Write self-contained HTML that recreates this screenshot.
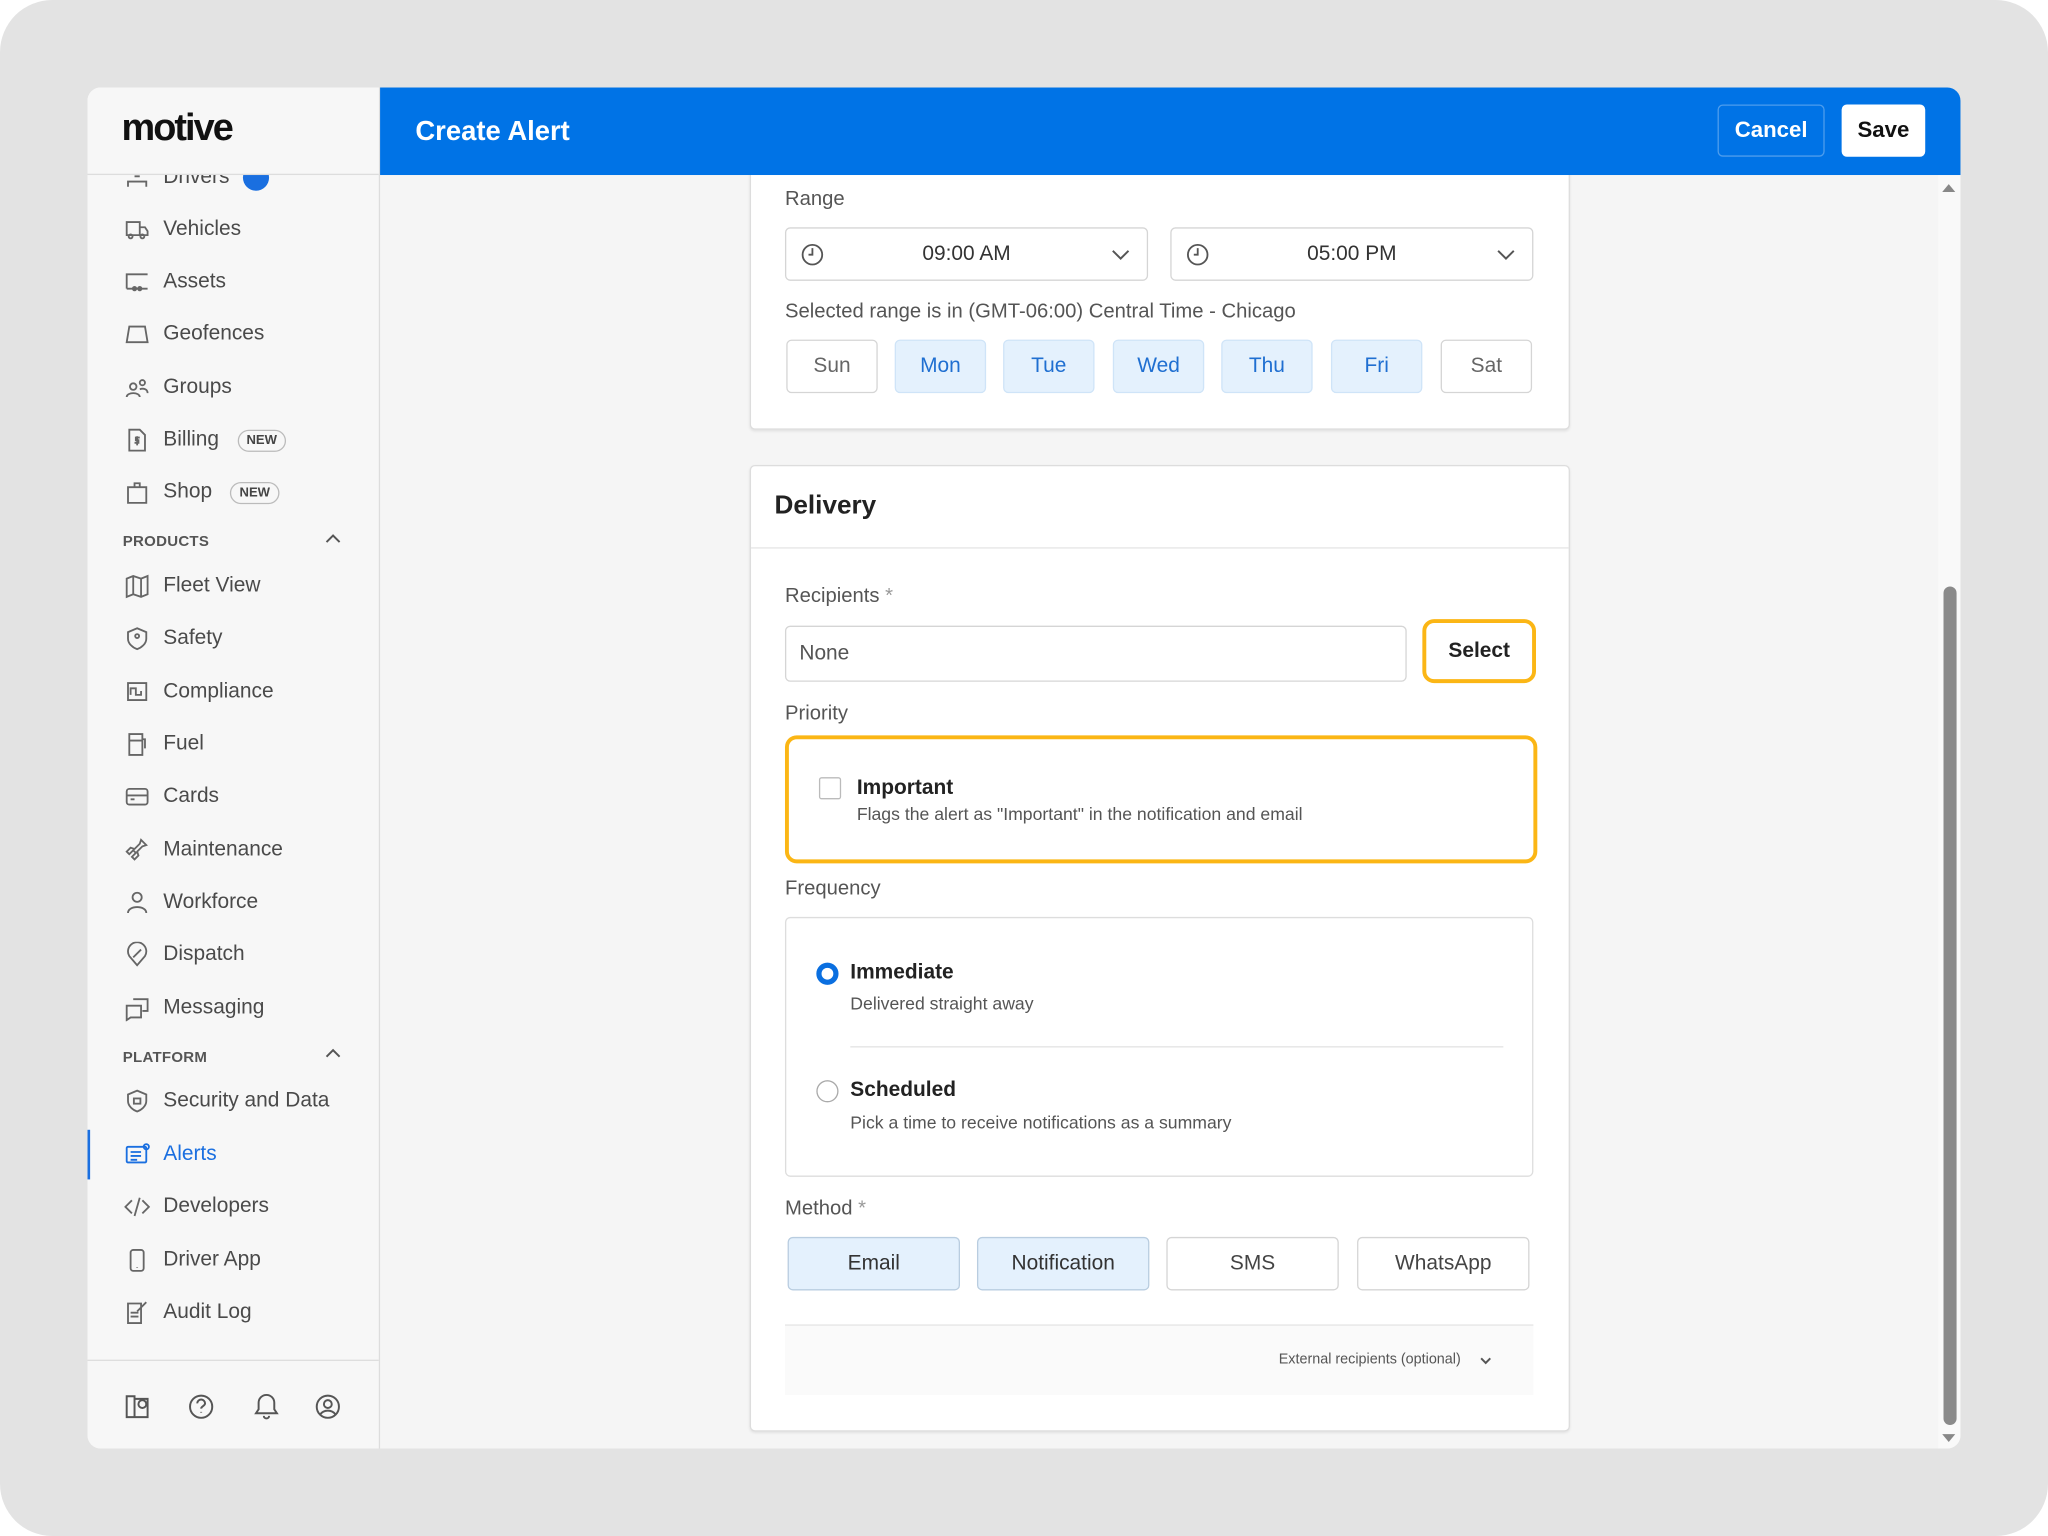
<!DOCTYPE html>
<html><head><meta charset="utf-8"><style>
*{box-sizing:border-box;margin:0;padding:0}
html,body{width:2048px;height:1536px;overflow:hidden;background:#fff}
#s{width:1568px;height:1176px;transform:scale(1.306122);transform-origin:0 0;position:relative;background:#e3e3e3;border-radius:40px;overflow:hidden;font-family:"Liberation Sans",sans-serif}
.a{position:absolute}
#win{left:67px;top:67px;width:1434px;height:1042px;background:#f5f5f5;border-radius:10px;overflow:hidden}
#side{left:0;top:0;width:224px;height:1042px;background:#f7f7f7;border-right:1px solid #ddd}
.it{position:absolute;left:28px;font-size:16px;color:#4a4a4a;height:20px;line-height:20px;display:flex;align-items:center}
.it svg{width:20px;height:20px;margin-right:10px;fill:none;stroke:#666;stroke-width:1.4}
.sec{position:absolute;left:27px;font-size:11.5px;font-weight:bold;color:#555;letter-spacing:.2px}
.new{margin-left:14px;border:1px solid #bbb;border-radius:10px;font-size:10px;font-weight:bold;padding:1px 6px;line-height:13px;color:#444}
.card{position:absolute;background:#fff;border:1px solid #ddd;border-radius:4px;box-shadow:0 1px 2px rgba(0,0,0,.08)}
.lbl{position:absolute;font-size:15.5px;color:#555}
.box{position:absolute;border:1px solid #d5d5d5;border-radius:4px;background:#fff;display:flex;align-items:center;justify-content:center;font-size:16px;color:#333}
.day{top:260px;width:70px;height:41px;color:#666}
.on{background:#e4f1fd;border-color:#cfe4f8;color:#1f6fd1}
.ar{stroke:#555;fill:none;stroke-width:1.5}
</style></head><body><div id="s">
<div id="win" class="a">
 <div id="side" class="a">
  <div class="a" style="left:0;top:0;width:223px;height:67px;border-bottom:1px solid #ddd;background:#f7f7f7;z-index:2"></div>
  <div class="a" style="left:26px;top:15px;font-size:29px;font-weight:bold;letter-spacing:-1.5px;color:#111;z-index:3">motive</div>
  <div class="it" style="top:59px"><svg viewBox="0 0 20 20"><path d="M3 17v-4h14v4M8 9h4"/></svg>Drivers<span style="display:inline-block;width:20px;height:20px;border-radius:50%;background:#1a6fe0;margin-left:10px"></span></div>
  <div class="it" style="top:99px"><svg viewBox="0 0 20 20"><path d="M2 4h10v10H2zM12 8h4l2 3v3h-6"/><circle cx="5" cy="15" r="1.5"/><circle cx="14" cy="15" r="1.5"/></svg>Vehicles</div>
  <div class="it" style="top:139px"><svg viewBox="0 0 20 20"><path d="M2 15V4h16M2 15h16"/><circle cx="8" cy="15" r="1.3"/><circle cx="12" cy="15" r="1.3"/></svg>Assets</div>
  <div class="it" style="top:179px"><svg viewBox="0 0 20 20"><path d="M4 4h12l2 12H2z"/></svg>Geofences</div>
  <div class="it" style="top:220px"><svg viewBox="0 0 20 20"><circle cx="7" cy="9" r="2.5"/><circle cx="14" cy="6" r="2"/><path d="M2 17c0-4 10-4 10 0M12 11c3-1 6 0 6 3"/></svg>Groups</div>
  <div class="it" style="top:260px"><svg viewBox="0 0 20 20"><path d="M4 2h8l4 4v12H4z"/><path d="M12 8H9v2h2v2H8M10 7v7"/></svg>Billing<span class="new">NEW</span></div>
  <div class="it" style="top:300px"><svg viewBox="0 0 20 20"><path d="M3 6h14v12H3zM8 6V3h4v3"/></svg>Shop<span class="new">NEW</span></div>
  <div class="sec" style="top:342px">PRODUCTS</div><svg class="a" style="left:182px;top:341px" width="12" height="8"><path class="ar" d="M1 7l5-5 5 5"/></svg>
  <div class="it" style="top:372px"><svg viewBox="0 0 20 20"><path d="M2 4l5-2 6 2 5-2v14l-5 2-6-2-5 2zM7 2v14M13 4v14"/></svg>Fleet View</div>
  <div class="it" style="top:412px"><svg viewBox="0 0 20 20"><path d="M10 2l7 3v5c0 4-4 7-7 8-3-1-7-4-7-8V5z"/><circle cx="10" cy="8" r="1.5"/></svg>Safety</div>
  <div class="it" style="top:453px"><svg viewBox="0 0 20 20"><path d="M3 3h14v13H3zM5 12V7h4v5h4V9"/></svg>Compliance</div>
  <div class="it" style="top:493px"><svg viewBox="0 0 20 20"><path d="M4 2h10v16H4zM4 7h10M14 6h2v7"/></svg>Fuel</div>
  <div class="it" style="top:533px"><svg viewBox="0 0 20 20"><rect x="2" y="4" width="16" height="12" rx="2"/><path d="M2 9h16M5 12h3"/></svg>Cards</div>
  <div class="it" style="top:574px"><svg viewBox="0 0 20 20"><path d="M13 2l4 4-3 1-4 4 1 3-3 3-2-2 3-3-2-2-3 3-2-2 3-3 3 1 4-4z"/></svg>Maintenance</div>
  <div class="it" style="top:614px"><svg viewBox="0 0 20 20"><circle cx="10" cy="6" r="3.5"/><path d="M3 18c0-6 14-6 14 0"/></svg>Workforce</div>
  <div class="it" style="top:654px"><svg viewBox="0 0 20 20"><path d="M10 18L4 11a7 7 0 1112 0z"/><path d="M7 12l6-6"/></svg>Dispatch</div>
  <div class="it" style="top:695px"><svg viewBox="0 0 20 20"><path d="M7 3h11v9h-4M2 8h11v9H5l-3 2z"/></svg>Messaging</div>
  <div class="sec" style="top:737px">PLATFORM</div><svg class="a" style="left:182px;top:735px" width="12" height="8"><path class="ar" d="M1 7l5-5 5 5"/></svg>
  <div class="it" style="top:766px"><svg viewBox="0 0 20 20"><path d="M10 2l7 3v5c0 4-4 7-7 8-3-1-7-4-7-8V5z"/><rect x="7.5" y="8" width="5" height="4"/></svg>Security and Data</div>
  <div class="a" style="left:0;top:798px;width:2px;height:38px;background:#1a6fe0"></div>
  <div class="it" style="top:807px;color:#1a6fe0"><svg viewBox="0 0 20 20" style="stroke:#1a6fe0"><rect x="2" y="4" width="15" height="12" rx="1"/><path d="M5 8h8M5 11h8M5 14h5"/><circle cx="17" cy="4" r="2"/></svg>Alerts</div>
  <div class="it" style="top:847px"><svg viewBox="0 0 20 20"><path d="M6 5l-5 5 5 5M14 5l5 5-5 5M12 3L8 17"/></svg>Developers</div>
  <div class="it" style="top:888px"><svg viewBox="0 0 20 20"><rect x="5" y="2" width="10" height="16" rx="2"/><path d="M10 15v.5"/></svg>Driver App</div>
  <div class="it" style="top:928px"><svg viewBox="0 0 20 20"><path d="M3 3h10v15H3zM5 10h6M5 13h6M10 9l7-7"/></svg>Audit Log</div>
  <div class="a" style="left:0;top:974px;width:223px;border-top:1px solid #ddd"></div>
  <svg class="a" style="left:28px;top:999px" width="180" height="22" fill="none" stroke="#555" stroke-width="1.5">
   <path d="M2 3h6v16H2zM8 5h10v14H8"/><circle cx="14" cy="9" r="3"/>
   <circle cx="59" cy="11" r="8.5"/><path d="M56 8.5a3 3 0 116 0c0 2-3 2-3 4M59 15v.5"/>
   <path d="M101 16h16l-2-3V8a6 6 0 00-12 0v5zM107 18a2 2 0 004 0"/>
   <circle cx="156" cy="11" r="8.5"/><circle cx="156" cy="9" r="3"/><path d="M150 17c3-4 9-4 12 0"/>
  </svg>
 </div>
 <div class="a" style="left:1417px;top:67px;width:17px;height:975px;background:#f9f9f9"></div>
 <svg class="a" style="left:1419px;top:72px" width="12" height="10"><path d="M1 8l5-6 5 6z" fill="#888"/></svg>
 <svg class="a" style="left:1419px;top:1029px" width="12" height="10"><path d="M1 2l5 6 5-6z" fill="#888"/></svg>
 <div class="a" style="left:1421px;top:382px;width:10px;height:642px;background:#8a8a8a;border-radius:5px"></div>

 <div class="card" style="left:507px;top:40px;width:628px;height:222px;border-top:none"></div>
 <div class="lbl" style="left:534px;top:77px">Range</div>
 <div class="box" style="left:534px;top:107px;width:278px;height:41px">09:00 AM</div>
 <div class="box" style="left:829px;top:107px;width:278px;height:41px">05:00 PM</div>
 <svg class="a" style="left:546px;top:119px" width="18" height="18" fill="none" stroke="#555" stroke-width="1.4"><circle cx="9" cy="9" r="7.5"/><path d="M9 4v5H6"/></svg>
 <svg class="a" style="left:841px;top:119px" width="18" height="18" fill="none" stroke="#555" stroke-width="1.4"><circle cx="9" cy="9" r="7.5"/><path d="M9 4v5H6"/></svg>
 <svg class="a" style="left:784px;top:124px" width="14" height="9"><path class="ar" d="M1 1l6 6 6-6"/></svg>
 <svg class="a" style="left:1079px;top:124px" width="14" height="9"><path class="ar" d="M1 1l6 6 6-6"/></svg>
 <div class="lbl" style="left:534px;top:163px;font-size:15.5px">Selected range is in (GMT-06:00) Central Time - Chicago</div>
 <div class="box day" style="left:535px;top:193px">Sun</div>
 <div class="box day on" style="left:618px;top:193px">Mon</div>
 <div class="box day on" style="left:701px;top:193px">Tue</div>
 <div class="box day on" style="left:785px;top:193px">Wed</div>
 <div class="box day on" style="left:868px;top:193px">Thu</div>
 <div class="box day on" style="left:952px;top:193px">Fri</div>
 <div class="box day" style="left:1036px;top:193px">Sat</div>

 <div class="card" style="left:507px;top:289px;width:628px;height:740px"></div>
 <div class="a" style="left:526px;top:309px;font-size:20px;font-weight:bold;color:#222">Delivery</div>
 <div class="a" style="left:508px;top:352px;width:626px;border-top:1px solid #e5e5e5"></div>
 <div class="lbl" style="left:534px;top:381px">Recipients <span style="color:#999">*</span></div>
 <div class="box" style="left:534px;top:412px;width:476px;height:43px;justify-content:flex-start;padding-left:10px;color:#555">None</div>
 <div class="a" style="left:1022px;top:407px;width:87px;height:49px;border:3px solid #fbb615;border-radius:9px;font-weight:bold;font-size:16px;color:#222;text-align:center;line-height:43px">Select</div>
 <div class="lbl" style="left:534px;top:471px">Priority</div>
 <div class="a" style="left:534px;top:496px;width:576px;height:98px;border:3px solid #fbb615;border-radius:9px"></div>
 <div class="a" style="left:560px;top:528px;width:17px;height:17px;border:1px solid #bbb;border-radius:2px"></div>
 <div class="a" style="left:589px;top:528px;font-size:16px;font-weight:bold;color:#222">Important</div>
 <div class="a" style="left:589px;top:549px;font-size:13.5px;color:#555">Flags the alert as "Important" in the notification and email</div>
 <div class="lbl" style="left:534px;top:605px">Frequency</div>
 <div class="a" style="left:534px;top:635px;width:573px;height:199px;border:1px solid #ddd;border-radius:4px"></div>
 <div class="a" style="left:558px;top:670px;width:17px;height:17px;border:4px solid #0a6fe0;border-radius:50%"></div>
 <div class="a" style="left:584px;top:669px;font-size:16px;font-weight:bold;color:#222">Immediate</div>
 <div class="a" style="left:584px;top:694px;font-size:13.5px;color:#555">Delivered straight away</div>
 <div class="a" style="left:584px;top:734px;width:500px;border-top:1px solid #e3e3e3"></div>
 <div class="a" style="left:558px;top:760px;width:17px;height:17px;border:1px solid #aaa;border-radius:50%"></div>
 <div class="a" style="left:584px;top:759px;font-size:16px;font-weight:bold;color:#222">Scheduled</div>
 <div class="a" style="left:584px;top:785px;font-size:13.5px;color:#555">Pick a time to receive notifications as a summary</div>
 <div class="lbl" style="left:534px;top:850px">Method <span style="color:#999">*</span></div>
 <div class="box on" style="left:536px;top:880px;width:132px;height:41px;color:#333;border-color:#b9cde0">Email</div>
 <div class="box on" style="left:681px;top:880px;width:132px;height:41px;color:#333;border-color:#b9cde0">Notification</div>
 <div class="box" style="left:826px;top:880px;width:132px;height:41px;color:#444">SMS</div>
 <div class="box" style="left:972px;top:880px;width:132px;height:41px;color:#444">WhatsApp</div>
 <div class="a" style="left:534px;top:947px;width:573px;height:54px;background:#fafafa;border-top:1px solid #e5e5e5"></div>
 <div class="a" style="left:912px;top:968px;font-size:11px;color:#555">External recipients (optional)</div>
 <svg class="a" style="left:1066px;top:972px" width="9" height="6"><path class="ar" d="M1 1l3.5 3.5L8 1"/></svg>

 <div class="a" style="left:224px;top:0;width:1210px;height:67px;background:#0073e6;z-index:10">
  <div class="a" style="left:27px;top:22px;color:#fff;font-size:21px;font-weight:bold">Create Alert</div>
  <div class="a" style="left:1024px;top:13px;width:82px;height:40px;border:1px solid rgba(255,255,255,.3);border-radius:4px;color:#fff;font-weight:bold;font-size:17px;text-align:center;line-height:38px">Cancel</div>
  <div class="a" style="left:1119px;top:13px;width:64px;height:40px;background:#fff;border-radius:4px;color:#111;font-weight:bold;font-size:17px;text-align:center;line-height:40px">Save</div>
 </div>
</div>
</div></body></html>
